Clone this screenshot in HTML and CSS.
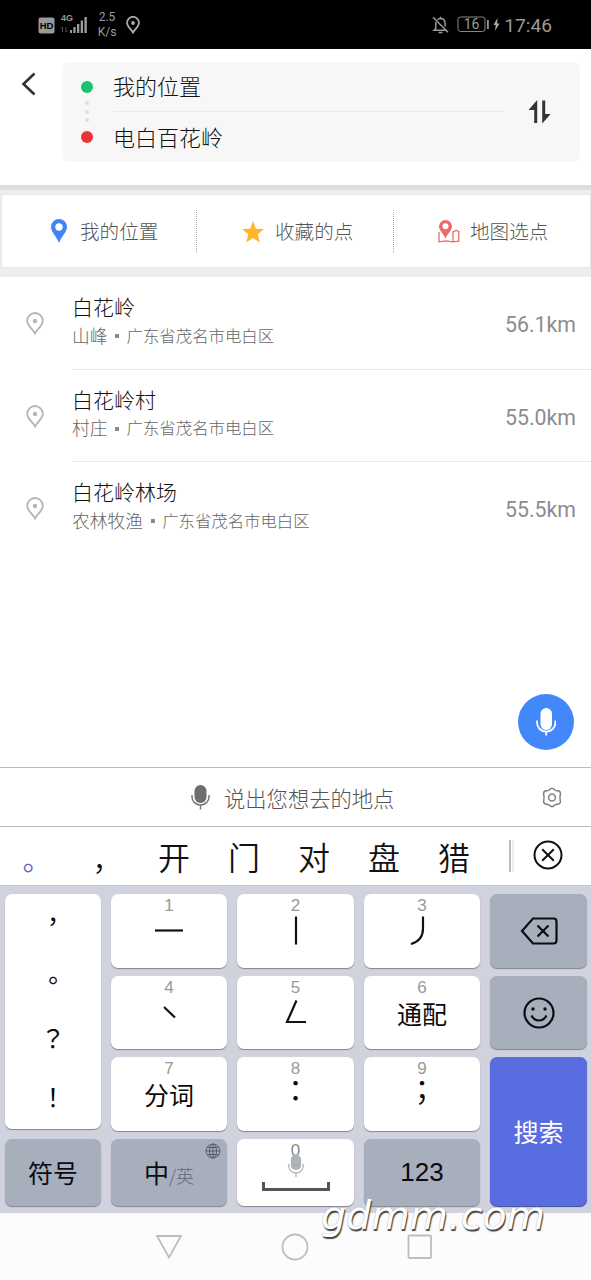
FILE: index.html
```html
<!DOCTYPE html>
<html lang="zh-CN">
<head>
<meta charset="utf-8">
<title>路线搜索</title>
<link rel="stylesheet" href="styles.css">
</head>
<body>
<div class="phone">
  <header class="status">
    <svg class="hd" width="17" height="17" viewBox="0 0 17 17"><rect x=".5" y=".5" width="16" height="16" rx="2" fill="#999"/><text x="8.5" y="12" text-anchor="middle" class="hd-text">HD</text></svg>
    <div class="signal"><span class="net">4G</span>
      <svg width="28" height="19" viewBox="0 0 28 19"><g fill="#9b9b9b"><rect x="10" y="15" width="2" height="3"/><rect x="13.3" y="12" width="2.3" height="6"/><rect x="17" y="9" width="2.3" height="9"/><rect x="20.7" y="5.5" width="2.3" height="12.5"/><rect x="24.4" y="2" width="2.4" height="16"/></g><path d="M2.5 12v5M1 13.500l1.500-1.500M6 12v5l1.500-1.500" stroke="#555" fill="none" stroke-width=".9"/></svg>
    </div>
    <div class="speed"><span>2.5</span><span>K/s</span></div>
    <svg class="loc" width="14" height="18" viewBox="0 0 14 18"><path d="M7 16.500C5.500 13.500 1 10.500 1 6.800a6 6 0 0 1 12 0c0 3.700-4.500 6.700-6 9.700z" fill="none" stroke="#aaa" stroke-width="1.800"/><circle cx="7" cy="7" r="1.900" fill="#aaa"/></svg>
    <div class="status-right">
      <svg width="17" height="18" viewBox="0 0 17 18" fill="none" stroke="#999" stroke-width="1.500"><path d="M5.500 3.800A5 5 0 0 1 8.500 2.500c3 0 4.600 2 4.600 5v3M3.800 6v6.500L2 14.300h12.500M8.500 2.500V.8M1 1.200l15 15M6.500 16.500h4"/></svg>
      <svg width="33" height="17" viewBox="0 0 33 17"><rect x="1" y="1" width="27" height="14.500" rx="2.500" fill="none" stroke="#888" stroke-width="1"/><rect x="30" y="4" width="1.800" height="9" fill="#999"/><text x="14.500" y="13.300" text-anchor="middle" class="batt-text">16</text></svg>
      <svg class="bolt" width="7" height="13" viewBox="0 0 7 13"><path d="M4.500 0L.5 7h2.300L2 13l4.500-7.500H4.200z" fill="#aaa"/></svg>
      <span class="clock">17:46</span>
    </div>
  </header>

  <section class="route">
    <svg class="back" width="16" height="26" viewBox="0 0 16 26"><path d="M13.500 2.500L2.500 13l11 10.500" fill="none" stroke="#333" stroke-width="2.600"/></svg>
    <div class="route-card">
      <div class="dots"><i class="dot green"></i><i class="mini"></i><i class="mini"></i><i class="mini"></i><i class="dot red"></i></div>
      <div class="fields"><div class="field">我的位置</div><div class="field">电白百花岭</div></div>
      <svg class="swap" width="23" height="24" viewBox="0 0 23 24" fill="#333"><path d="M9.200 0v23H6.200V10H.6zM14.200 23.500V.6h3V14h5.500z"/></svg>
    </div>
  </section>

  <div class="band">
    <nav class="tabs">
      <div class="tab">
        <svg class="pin" width="16" height="24" viewBox="0 0 16 24"><path fill-rule="evenodd" d="M8 0a8 8 0 0 1 8 8c0 5-5 8.500-8 16C5 16.500 0 13 0 8a8 8 0 0 1 8-8zm0 4.300a3.700 3.700 0 1 0 0 7.400 3.700 3.700 0 0 0 0-7.400z" fill="#4385f0"/></svg>
        <span>我的位置</span>
      </div>
      <div class="tab">
        <svg class="star" width="22" height="22" viewBox="0 0 22 22"><path d="M11 0l2.900 7.700 8.100.4-6.300 5.200L17.800 21.500 11 17l-6.800 4.500 2.100-8.200L0 8.100l8.100-.4z" fill="#ffb52b"/></svg>
        <span>收藏的点</span>
      </div>
      <div class="tab">
        <svg class="map" width="22" height="23" viewBox="0 0 22 23"><path fill-rule="evenodd" d="M7.500 0A6.500 6.500 0 0 1 14 6.500c0 4-4.500 7-6.500 12-2-5-6.500-8-6.500-12A6.500 6.500 0 0 1 7.500 0zm0 3.200a3 3 0 1 0 0 6 3 3 0 0 0 0-6z" fill="#ed6a6a"/><path d="M1 12v9.800l7-1 6.500 1 6.300-.7V11.500L18 10.500l-3 1.500v9.500" fill="none" stroke="#ed6a6a" stroke-width="1.300"/></svg>
        <span>地图选点</span>
      </div>
    </nav>
  </div>

  <main class="results">
    <article class="item">
      <svg class="place" width="18" height="23" viewBox="0 0 18 23"><path d="M9 21.500C7 17 1.200 14 1.200 8.800a7.800 7.800 0 0 1 15.600 0C16.800 14 11 17 9 21.500z" fill="none" stroke="#b5b5b5" stroke-width="1.800"/><circle cx="9" cy="9" r="2.200" fill="#b5b5b5"/></svg>
      <div class="info"><div class="words"><h3>白花岭</h3><p><b>山峰</b><i></i>广东省茂名市电白区</p></div><span class="km">56.1km</span></div>
    </article>
    <article class="item">
      <svg class="place" width="18" height="23" viewBox="0 0 18 23"><path d="M9 21.500C7 17 1.200 14 1.200 8.800a7.800 7.800 0 0 1 15.600 0C16.800 14 11 17 9 21.500z" fill="none" stroke="#b5b5b5" stroke-width="1.800"/><circle cx="9" cy="9" r="2.200" fill="#b5b5b5"/></svg>
      <div class="info"><div class="words"><h3>白花岭村</h3><p><b>村庄</b><i></i>广东省茂名市电白区</p></div><span class="km">55.0km</span></div>
    </article>
    <article class="item">
      <svg class="place" width="18" height="23" viewBox="0 0 18 23"><path d="M9 21.500C7 17 1.200 14 1.200 8.800a7.800 7.800 0 0 1 15.600 0C16.800 14 11 17 9 21.500z" fill="none" stroke="#b5b5b5" stroke-width="1.800"/><circle cx="9" cy="9" r="2.200" fill="#b5b5b5"/></svg>
      <div class="info"><div class="words"><h3>白花岭林场</h3><p><b>农林牧渔</b><i></i>广东省茂名市电白区</p></div><span class="km">55.5km</span></div>
    </article>
    <button class="fab" aria-label="语音"><svg width="20" height="28" viewBox="0 0 20 28"><rect x="4.500" y="0" width="11.500" height="22" rx="5.700" fill="#fff"/><path d="M1 12.500v2a9.200 9.200 0 0 0 18.400 0v-2M10.200 23.500v4" fill="none" stroke="#fff" stroke-width="1.800"/></svg></button>
  </main>

  <div class="voice">
    <svg class="mic" width="19" height="25" viewBox="0 0 19 25"><rect x="3.500" y="0" width="12" height="18" rx="6" fill="#6d6d6d"/><path d="M1 10v2a8.500 8 0 0 0 17 0v-2M9.500 20v4.500" fill="none" stroke="#777" stroke-width="1.500"/></svg>
    <span>说出您想去的地点</span>
    <svg class="gear" width="20" height="21" viewBox="0 0 20 21" fill="none" stroke="#808080" stroke-width="1.500"><path d="M7.500 2.700Q10 0 12.500 2.700 14 4 16 3.800q3 .7 2.300 3.700-.8 3 0 6 .7 3-2.300 3.700-2-.2-3.500 1.100-2.500 2.700-5 0Q6 17 4 17.200 1 16.500 1.700 13.500q.8-3 0-6Q1 4.500 4 3.800 6 4 7.500 2.700z"/><circle cx="10" cy="10.500" r="3.400"/></svg>
  </div>

  <div class="candidates">
    <span class="cand mark blue">。</span><span class="cand mark">，</span><span class="cand">开</span><span class="cand">门</span><span class="cand">对</span><span class="cand">盘</span><span class="cand">猎</span>
    <i class="sep"></i>
    <svg class="close" width="30" height="30" viewBox="0 0 30 30" fill="none" stroke="#111" stroke-width="2"><circle cx="15" cy="15" r="13.500"/><path d="M9.200 9.200l11.600 11.600M20.800 9.200L9.200 20.800"/></svg>
  </div>

  <section class="keyboard">
    <div class="key punct" lang="zh-TW"><span>，</span><span>。</span><span>？</span><span>！</span></div>
    <div class="key k1"><small>1</small><svg width="40" height="30" viewBox="0 0 40 30"><path d="M6 14.500h28"/></svg></div>
    <div class="key k2"><small>2</small><svg width="40" height="30" viewBox="0 0 40 30"><path d="M20 .5v28"/></svg></div>
    <div class="key k3"><small>3</small><svg width="40" height="30" viewBox="0 0 40 30"><path d="M21 .5v12q0 12-12 15.500"/></svg></div>
    <button class="key tool del" aria-label="删除"><svg width="38" height="28" viewBox="0 0 38 28" fill="none"><path d="M13 1.500h20.500q3 0 3 3v19q0 3-3 3H13L2 14z"/><path d="M17.500 8.500l11 11M28.500 8.500l-11 11"/></svg></button>
    <div class="key k4"><small>4</small><svg width="40" height="30" viewBox="0 0 40 30"><path d="M15 9l11 10.500"/></svg></div>
    <div class="key k5"><small>5</small><svg width="40" height="30" viewBox="0 0 40 30"><path d="M20.500 2.500L11 24h19"/></svg></div>
    <div class="key k6"><small>6</small><span>通配</span></div>
    <button class="key tool face" aria-label="表情"><svg width="32" height="32" viewBox="0 0 32 32" fill="none"><circle cx="16" cy="16" r="14.500"/><path d="M8.500 18.500q2.500 5 7.500 5t7.500-5"/><circle cx="10" cy="12" r="1.700" class="eye"/><circle cx="22" cy="12" r="1.700" class="eye"/></svg></button>
    <div class="key k7"><small>7</small><span>分词</span></div>
    <div class="key k8"><small>8</small><span class="colon" lang="zh-TW">：</span></div>
    <div class="key k9"><small>9</small><span class="colon" lang="zh-TW">；</span></div>
    <button class="key search">搜索</button>
    <button class="key tool sym">符号</button>
    <button class="key tool lang"><span>中</span><em>/英</em>
      <svg class="globe" width="16" height="16" viewBox="0 0 16 16"><g fill="none"><circle cx="8" cy="8" r="7"/><ellipse cx="8" cy="8" rx="3.500" ry="7"/><path d="M8 1v14M1 8h14M2.500 4.500h11M2.500 11.500h11"/></g></svg></button>
    <div class="key space"><small>0</small><svg width="68" height="40" viewBox="0 0 68 40"><rect x="28.800" y="0" width="10.400" height="15" rx="5" fill="#adb1b8"/><path d="M26.500 9q.5 9 7.500 9t7.500-9M34 18v4" stroke="#b4b8be" stroke-width="1.400" fill="none"/><path d="M1.500 27v7.500h65V27" stroke="#555" stroke-width="3" fill="none"/></svg></div>
    <button class="key tool num">123</button>
  </section>

  <footer class="navbar">
    <svg width="28" height="26" viewBox="0 0 28 26"><path d="M2 2h24L14 23.500z"/></svg>
    <svg width="28" height="28" viewBox="0 0 28 28"><circle cx="14" cy="14" r="12.500"/></svg>
    <svg width="26" height="26" viewBox="0 0 26 26"><rect x="1.500" y="1.500" width="22.500" height="22.500" rx="1"/></svg>
  </footer>
  <div class="watermark">gdmm.com</div>
</div>
</body>
</html>
```

FILE: styles.css
```css
* { box-sizing: border-box; margin: 0; padding: 0; }
body { background: #fff; font-family: Roboto, "Noto Sans CJK SC", sans-serif; font-weight: 300; }
svg { display: block; flex: none; }
button { border: 0; font: inherit; color: inherit; }
.phone { position: relative; width: 591px; height: 1280px; overflow: hidden; display: flex; flex-direction: column; }

.status { height: 49px; background: #000; display: flex; align-items: center; padding: 0 39px 0 38px; color: #999; flex: none; }
.hd { margin-top: 1px; }
.hd-text { font: bold 9.5px "Liberation Sans", sans-serif; fill: #000; }
.signal { position: relative; margin-left: 5px; }
.net { position: absolute; left: 1px; top: -1px; font: bold 9px/9px "Liberation Sans", sans-serif; }
.speed { width: 26px; margin-left: 6px; display: flex; flex-direction: column; align-items: center; font-size: 12px; line-height: 15px; font-weight: 400; padding-top: 1px; }
.loc { margin-left: 6px; }
.status-right { margin-left: auto; display: flex; align-items: center; }
.batt-text { font: 400 14px Roboto, sans-serif; fill: #999; }
.status-right svg + svg { margin-left: 8px; }
.status-right .bolt { margin-left: 3px !important; }
.clock { font-size: 19.200px; font-weight: 400; line-height: 24px; margin-left: 4px; padding-top: 2px; }

.route { height: 136px; display: flex; padding: 13px 11px 0 21px; flex: none; }
.back { margin-top: 9px; }
.route-card { width: 518px; height: 100px; margin-left: 25px; background: #f7f7f7; border-radius: 7px; display: flex; }
.dots { width: 12px; margin: 19px 0 0 19px; display: flex; flex-direction: column; align-items: center; }
.dot { width: 12px; height: 12px; border-radius: 50%; flex: none; }
.green { background: #17c56d; margin-bottom: 8px; }
.red { background: #ec3434; margin-top: 4px; }
.mini { width: 4px; height: 4px; border-radius: 50%; background: #dedede; margin-bottom: 4.700px; flex: none; }
.fields { width: 391px; margin-left: 20px; }
.field { height: 50px; line-height: 49px; padding-top: 2px; font-size: 22px; color: #111; }
.field:first-child { border-bottom: 1px solid #eaeaea; padding-top: 1px; }
.swap { margin: 38px 0 0 24px; }

.band { height: 92px; background: #eee; border-top: 5px solid #dedede; padding: 5px 1px 10px 2px; flex: none; }
.tabs { height: 72px; background: #fff; display: grid; grid-template-columns: 194px 197px 1fr; border-radius: 2px; box-shadow: 0 0 2px #ddd; }
.tab { display: flex; align-items: center; font-size: 19.600px; color: #555; }
.tab + .tab::before { content: ""; height: 43px; border-left: 1px dotted #aaa; }
.tab span { line-height: 30px; padding-top: 3px; }
.pin { margin: 0 13px 0 49px; }
.star { margin: 1px 11px 0 45px; }
.map { margin: 0 10px 0 44px; }

.results { position: relative; height: 490px; flex: none; }
.item { height: 92.500px; display: flex; padding-left: 26px; }
.place { margin-top: 35px; }
.info { flex: 1; margin-left: 28px; padding-right: 15px; display: flex; justify-content: space-between; border-bottom: 1px solid #e9e9e9; }
.item:nth-child(3) .info { border: 0; }
.words { padding-top: 18px; }
h3 { font-size: 21px; font-weight: 300; line-height: 27.500px; color: #111; }
p { display: flex; align-items: center; font-size: 16.400px; line-height: 27px; color: #666; }
p b { font-weight: 300; font-size: 17.800px; }
p i { width: 4px; height: 4px; background: #8a8a8a; margin: 0 7.500px; }
.km { font-size: 21.300px; font-weight: 400; line-height: 93px; color: #8c8c8c; padding-top: 1px; }
.fab { position: absolute; right: 17px; bottom: 17px; width: 56px; height: 56px; border-radius: 50%; background: #4388fb; display: grid; place-items: center; }

.voice { height: 60px; border-top: 1px solid #bdbdbd; border-bottom: 1px solid #bdbdbd; display: flex; align-items: center; padding: 0 29px 0 191px; font-size: 21.300px; color: #555; flex: none; }
.voice span { margin-left: 14px; }
.gear { margin-left: auto; }

.candidates { height: 58px; display: flex; align-items: center; padding-left: 135px; font: 400 32px/58px "Noto Sans CJK SC", sans-serif; color: #111; flex: none; }
.cand { width: 70px; text-align: center; flex: none; font-weight: 350; }
.cand:first-child { margin-left: -136px; }
.mark { font-size: 29px; padding-left: 6px; padding-top: 3px; }
.blue { color: #5a67c8; }
.sep { width: 5px; height: 32px; border-left: 2px solid #bbb; border-right: 2px solid #eee; margin-left: 20px; flex: none; }
.close { margin-left: 19px; margin-top: -2px; }

.keyboard { height: 328px; background: #d0d3dd; border-top: 1px solid #c4c7ce; padding: 8px 4px 8px 5px; display: grid; grid-template-columns: 96px 116.500px 117px 116.500px 97px; column-gap: 9.750px; grid-template-rows: 74px 73.500px 74px 67px; row-gap: 7.700px; flex: none; font-family: "Noto Sans CJK SC", sans-serif; font-weight: 400; color: #0a0a0a; }
.key { background: #fff; border-radius: 7px; box-shadow: 0 1px 1px #83868d; display: flex; flex-direction: column; align-items: center; font-size: 25px; }
.key small { font: 300 17px/20px "Liberation Sans", sans-serif; color: #999; margin-top: 2px; }
.key span { line-height: 31px; }
.k1 svg, .k2 svg, .k3 svg, .k4 svg, .k5 svg { stroke: #111; stroke-width: 2.200; fill: none; }
.punct { grid-row: 1 / 4; height: 235px; font-family: "Noto Sans CJK TC", sans-serif; font-size: 25px; }
.key.punct span { height: 58.700px; line-height: 52px; }
.key .colon { font-family: "Noto Sans CJK TC", sans-serif; font-size: 29px; line-height: 21px; }
.tool { background: #a7afbd; color: #0a0b12; justify-content: center; }
.del svg, .face svg { stroke: #0c0d14; stroke-width: 2.200; }
.face svg { margin-top: 2px; }
.eye { fill: #0c0d14; stroke: none; }
.search { grid-column: 5; grid-row: 3 / 5; background: #586de0; color: #fff; justify-content: center; box-shadow: 0 1px 1px #3d4a96; }
.lang { position: relative; flex-direction: row; align-items: center; }
.lang em { font-style: normal; font-size: 18px; color: #636975; padding-top: 6px; font-weight: 300; }
.globe { position: absolute; right: 6px; top: 4px; stroke: #555b68; stroke-width: 1; }
.key.space small { margin-top: 2px; height: 14px; color: #888; }
.num { font-size: 26px; font-family: "Liberation Sans", sans-serif; }

.navbar { flex: 1; background: #fcfcfc; display: flex; align-items: center; justify-content: center; gap: 98px; padding-right: 3px; }
.navbar svg { fill: none; stroke: #bdbdbd; stroke-width: 1.800; }
.watermark { position: absolute; left: 321px; top: 1187px; font: italic 400 39.500px/56px "DejaVu Sans", sans-serif; color: #fff; text-shadow: 1px 2px 1px #444, 0 0 1px #999; white-space: nowrap; }
```
